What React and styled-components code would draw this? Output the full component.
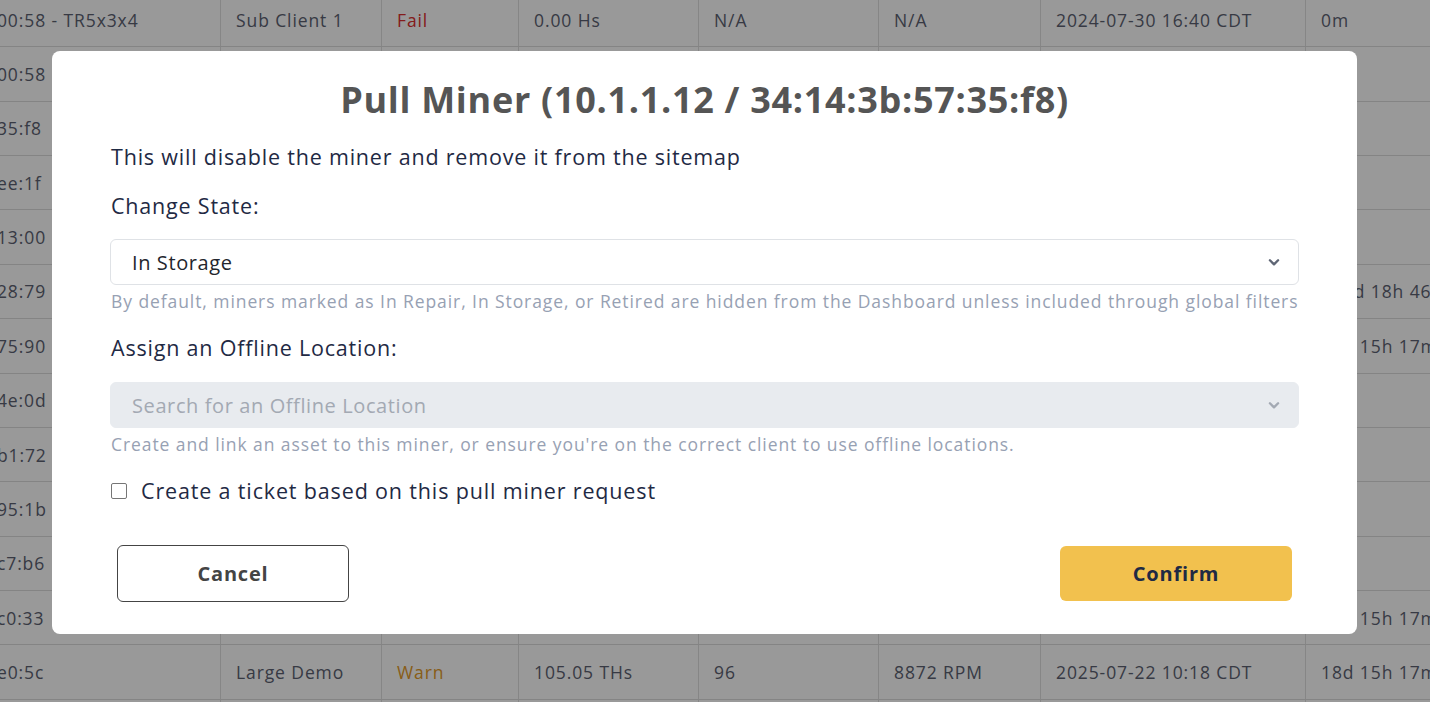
import React from "react";
import styled, { createGlobalStyle } from "styled-components";

const GlobalStyle = createGlobalStyle`
  html, body {
    margin: 0;
    padding: 0;
    height: 100%;
    overflow: hidden;
    background: #ffffff;
    font-family: "Open Sans", Lato, sans-serif;
  }
`;

const rows = [
  ["34:14:3b:57:00:58 - TR5x3x4", "Sub Client 1", "Fail", "0.00 Hs", "N/A", "N/A", "2024-07-30 16:40 CDT", "0m"],
  ["34:14:3b:57:00:58", "Large Demo", "Ok", "104.12 THs", "95", "8820 RPM", "2025-07-22 10:18 CDT", ""],
  ["34:14:3b:57:35:f8", "Large Demo", "Ok", "103.88 THs", "94", "8790 RPM", "2025-07-22 10:18 CDT", ""],
  ["34:14:3b:57:ee:1f", "Large Demo", "Ok", "102.40 THs", "97", "8856 RPM", "2025-07-22 10:18 CDT", ""],
  ["34:14:3b:57:13:00", "Large Demo", "Ok", "104.77 THs", "93", "8801 RPM", "2025-07-22 10:18 CDT", ""],
  ["34:14:3b:57:28:79", "Large Demo", "Ok", "101.05 THs", "96", "8844 RPM", "2025-07-21 17:50 CDT", "117d 18h 46m"],
  ["34:14:3b:57:75:90", "Large Demo", "Ok", "105.30 THs", "95", "8872 RPM", "2025-07-22 10:18 CDT", "18d 15h 17m"],
  ["34:14:3b:57:4e:0d", "Large Demo", "Ok", "104.01 THs", "94", "8812 RPM", "2025-07-22 10:18 CDT", ""],
  ["34:14:3b:57:b1:72", "Large Demo", "Ok", "103.22 THs", "96", "8830 RPM", "2025-07-22 10:18 CDT", ""],
  ["34:14:3b:57:95:1b", "Large Demo", "Ok", "104.56 THs", "95", "8860 RPM", "2025-07-22 10:18 CDT", ""],
  ["34:14:3b:57:c7:b6", "Large Demo", "Ok", "102.98 THs", "96", "8841 RPM", "2025-07-22 10:18 CDT", ""],
  ["34:14:3b:57:c0:33", "Large Demo", "Ok", "105.11 THs", "97", "8868 RPM", "2025-07-22 10:18 CDT", "18d 15h 17m"],
  ["34:14:3b:57:e0:5c", "Large Demo", "Warn", "105.05 THs", "96", "8872 RPM", "2025-07-22 10:18 CDT", "18d 15h 17m"],
  ["34:14:3b:57:9a:02", "Large Demo", "Ok", "104.44 THs", "95", "8850 RPM", "2025-07-22 10:18 CDT", "18d 15h 17m"],
];

const colWidths = [348, 161, 137, 180, 180, 162, 265, 200];

const Page = styled.div`
  height: 702px;
  overflow: hidden;
`;

const Table = styled.div`
  margin-left: -128px;
  margin-top: -7px;
`;

const Row = styled.div`
  display: grid;
  grid-template-columns: ${colWidths.map((w) => w + "px").join(" ")};
  height: 54.36px;
  box-sizing: border-box;
  border-bottom: 1px solid #dcdcdc;
`;

const Cell = styled.div`
  display: flex;
  align-items: center;
  padding-left: 15px;
  border-left: ${(p) => (p.$first ? "none" : "1px solid #e0e0e0")};
  font-size: 17.5px;
  letter-spacing: 0.9px;
  color: ${(p) => (p.$tone === "Fail" ? "#dc2f2f" : p.$tone === "Warn" ? "#e39b2a" : "#5c6272")};
  white-space: nowrap;
  overflow: hidden;
`;

const Overlay = styled.div`
  position: fixed;
  inset: 0;
  background: rgba(0, 0, 0, 0.4);
  display: flex;
  align-items: flex-start;
  padding: 51px 0 0 52px;
`;

const Modal = styled.div`
  width: 1305px;
  height: 583px;
  box-sizing: border-box;
  background: #ffffff;
  border-radius: 8px;
  padding: 24px 58px 0 58px;
  display: flex;
  flex-direction: column;
`;

const Title = styled.h2`
  margin: 0;
  text-align: center;
  font-size: 36px;
  font-weight: 700;
  letter-spacing: 0.7px;
  color: #555555;
  line-height: 50px;
`;

const Text = styled.p`
  margin: ${(p) => p.$mt || 0}px 0 0 1px;
  font-size: 21.5px;
  letter-spacing: 0.8px;
  color: #1f2a44;
  line-height: 26px;
`;

const SelectBox = styled.div`
  margin-top: ${(p) => p.$mt}px;
  height: 46px;
  box-sizing: border-box;
  border: 1px solid ${(p) => (p.$disabled ? "#e8ebef" : "#dfe2e6")};
  background: ${(p) => (p.$disabled ? "#e8ebef" : "#ffffff")};
  border-radius: 6px;
  display: flex;
  align-items: center;
  justify-content: space-between;
  padding: 0 17px 0 21px;
  font-size: 20px;
  letter-spacing: 0.6px;
  color: ${(p) => (p.$disabled ? "#a3a9b3" : "#23262d")};
`;

const Help = styled.div`
  margin-top: 5px;
  margin-left: 1px;
  font-size: 17.5px;
  letter-spacing: 0.92px;
  line-height: 22px;
  color: #97a1b3;
  white-space: nowrap;
`;

const CheckRow = styled.label`
  margin-top: 23px;
  display: flex;
  align-items: center;
  gap: 14px;
  font-size: 21.5px;
  letter-spacing: 0.85px;
  line-height: 26px;
  color: #1f2a44;
`;

const Check = styled.span`
  width: 16px;
  height: 16px;
  border: 1px solid #767676;
  border-radius: 2px;
  box-sizing: border-box;
  margin-left: 1px;
`;

const Buttons = styled.div`
  margin-top: 41px;
  padding: 0 7px;
  display: flex;
  justify-content: space-between;
`;

const Button = styled.button`
  width: 232px;
  height: ${(p) => (p.$primary ? 55 : 57)}px;
  margin-top: ${(p) => (p.$primary ? 1 : 0)}px;
  border-radius: 6px;
  border: ${(p) => (p.$primary ? "none" : "1px solid #444444")};
  background: ${(p) => (p.$primary ? "#f2c14e" : "#ffffff")};
  color: ${(p) => (p.$primary ? "#1f2a44" : "#444444")};
  font-family: inherit;
  font-size: 20px;
  letter-spacing: 0.8px;
  font-weight: 700;
`;

const Chevron = ({ color }) => (
  <svg width="14" height="14" viewBox="0 0 24 24" fill="none" stroke={color} strokeWidth="4" strokeLinecap="round" strokeLinejoin="round">
    <path d="M5 9l7 7 7-7" />
  </svg>
);

export default function App() {
  return (
    <>
      <GlobalStyle />
      <Page>
        <Table>
          {rows.map((r, i) => (
            <Row key={i}>
              {r.map((c, j) => (
                <Cell key={j} $first={j === 0} $tone={j === 2 ? c : null}>
                  {j === 2 && c === "Ok" ? "" : c}
                </Cell>
              ))}
            </Row>
          ))}
        </Table>
      </Page>
      <Overlay>
        <Modal>
          <Title>Pull Miner (10.1.1.12 / 34:14:3b:57:35:f8)</Title>
          <Text $mt={19}>This will disable the miner and remove it from the sitemap</Text>
          <Text $mt={23}>Change State:</Text>
          <SelectBox $mt={20}>
            <span>In Storage</span>
            <Chevron color="#5f6675" />
          </SelectBox>
          <Help>By default, miners marked as In Repair, In Storage, or Retired are hidden from the Dashboard unless included through global filters</Help>
          <Text $mt={23}>Assign an Offline Location:</Text>
          <SelectBox $mt={21} $disabled>
            <span>Search for an Offline Location</span>
            <Chevron color="#a3a9b3" />
          </SelectBox>
          <Help>Create and link an asset to this miner, or ensure you're on the correct client to use offline locations.</Help>
          <CheckRow>
            <Check />
            Create a ticket based on this pull miner request
          </CheckRow>
          <Buttons>
            <Button>Cancel</Button>
            <Button $primary>Confirm</Button>
          </Buttons>
        </Modal>
      </Overlay>
    </>
  );
}
